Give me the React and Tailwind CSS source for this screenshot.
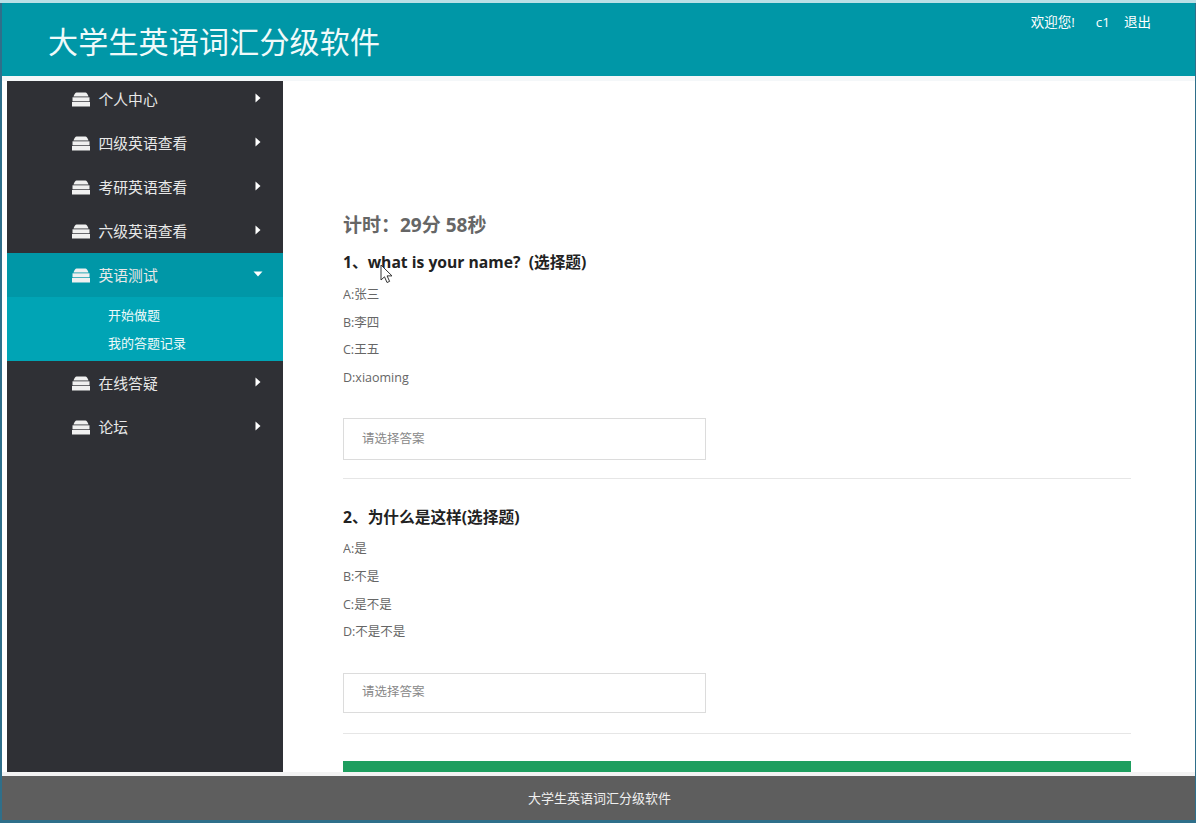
import React from "react";

const font = { fontFamily: '"Open Sans", "Noto Sans CJK SC", sans-serif' };

const MenuIcon = () => (
  <svg width="18" height="15" viewBox="0 0 18 15" className="shrink-0" fill="#f0f0f0">
    <path d="M4.500 0.500h9q1.500 0 3 4H1.500q1.500-4 3-4z" />
    <path d="M0.500 5.300h17v4H0.500z" />
    <path d="M0 10h18v4.500H0z" />
  </svg>
);

const Caret = ({ open }) => (
  <svg width="10" height="10" viewBox="0 0 10 10" fill="#fff" className="shrink-0">
    {open ? <path d="M0.500 2.500h9L5 7.500z" /> : <path d="M2.500 0.500L7.500 5l-5 4.500z" />}
  </svg>
);

const MenuItem = ({ label, open }) => (
  <div className={`flex h-11 items-center pl-[65px] pr-[20px] ${open ? "bg-[#0097a7]" : ""}`}>
    <MenuIcon />
    <span className="ml-[8.500px] flex-1 text-[14.800px] text-[#e8e8e8]">{label}</span>
    <span className="-mt-[3px]">
      <Caret open={open} />
    </span>
  </div>
);

const Question = ({ title, options, optionsGap, inputHeight, bottomGap }) => (
  <div className={`${bottomGap} border-b border-[#e6e6e6]`}>
    <div className="text-[15.700px] leading-[22px] font-bold whitespace-pre text-[#222]">{title}</div>
    <div className={`${optionsGap} flex flex-col text-[12.500px] leading-[27.600px] text-[#666]`}>
      {options.map((o) => (
        <div key={o}>{o}</div>
      ))}
    </div>
    <div className={`${inputHeight} mt-[27px] flex w-[363px] items-center border border-[#dcdcdc] pl-[18px] text-[12.500px] text-[#888]`}>
      请选择答案
    </div>
  </div>
);

export default function App() {
  return (
    <div style={font} className="relative flex h-[823px] w-[1196px] flex-col overflow-hidden bg-[#2f6f8a]">
      <div className="h-[3px] bg-[#b9e0e6]" />
      <div className="flex flex-1 flex-col overflow-hidden pl-[2px] pr-[1px] pb-[3px]">
        <header className="flex h-[73px] shrink-0 justify-between bg-[#0097a7] text-white">
          <div className="pl-[46px] pt-[20px] text-[30px] leading-[38px] tracking-[0.2px] text-[#f0fafa]">
            大学生英语词汇分级软件
          </div>
          <div className="flex gap-[21px] pr-[44px] pt-[10px] text-[13.500px] leading-[18px]">
            <span>欢迎您!</span>
            <span className="flex gap-[14px]">
              <span>c1</span>
              <span>退出</span>
            </span>
          </div>
        </header>

        <div className="flex min-h-0 flex-1 gap-[60px] border-t-[5px] border-b-[4px] border-t-[#f4f7f9] border-b-[#f3f3f3] bg-white pl-[5px]">
          <aside className="w-[276px] shrink-0 overflow-hidden bg-[#2f3035]">
            <div className="-mt-[4px]">
              <MenuItem label="个人中心" />
              <MenuItem label="四级英语查看" />
              <MenuItem label="考研英语查看" />
              <MenuItem label="六级英语查看" />
              <MenuItem label="英语测试" open />
              <div className="flex h-[64px] flex-col justify-center bg-[#00a4b5] pl-[101px] text-[13px] leading-[28px] text-[#eefafa]">
                <div>开始做题</div>
                <div>我的答题记录</div>
              </div>
              <MenuItem label="在线答疑" />
              <MenuItem label="论坛" />
            </div>
          </aside>

          <main className="min-w-0 flex-1 overflow-hidden pr-[64px] pt-[131px]">
            <div className="text-[19px] leading-[26px] font-bold text-[#666]">计时：29分 58秒</div>
            <div className="mt-[13px] flex flex-col gap-[27px]">
              <Question
                title="1、what is your name?  (选择题)"
                options={["A:张三", "B:李四", "C:王五", "D:xiaoming"]}
                optionsGap="mt-[8px]"
                inputHeight="h-[42px]"
                bottomGap="pb-[18px]"
              />
              <Question
                title="2、为什么是这样(选择题)"
                options={["A:是", "B:不是", "C:是不是", "D:不是不是"]}
                optionsGap="mt-[7px]"
                inputHeight="h-[40px]"
                bottomGap="pb-[20px]"
              />
            </div>
            <div className="mt-[27px] h-[40px] bg-[#1e9e5f]" />
          </main>
        </div>

        <footer className="flex h-[44px] shrink-0 items-center justify-center bg-[#5e5e5e] pl-[2px] pt-[1px] text-[13px] text-[#f0f0f0]">
          大学生英语词汇分级软件
        </footer>
      </div>

      {/* mouse pointer caught in the capture */}
      <svg width="14" height="20" viewBox="0 0 14 20" className="absolute left-[380px] top-[264px]">
        <path d="M1 1v15l3.500-3.200 2.500 5.700 2.600-1.100-2.500-5.500H12z" fill="#fff" stroke="#333" strokeWidth="1" />
      </svg>
    </div>
  );
}
